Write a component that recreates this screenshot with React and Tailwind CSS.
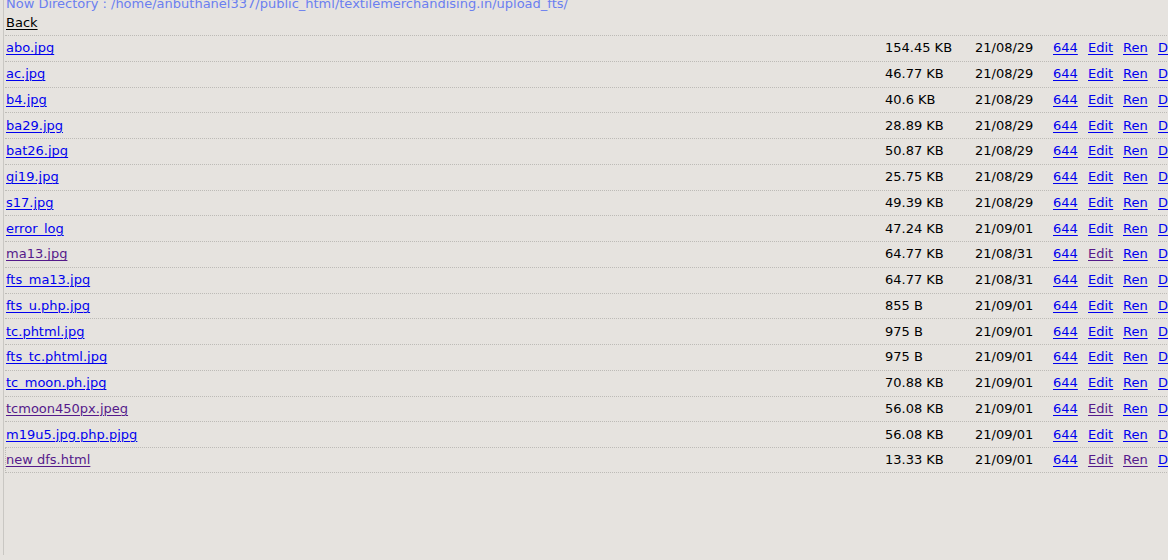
import React from "react";

const rows = [
  { n: "abo.jpg", s: "154.45 KB", d: "21/08/29" },
  { n: "ac.jpg", s: "46.77 KB", d: "21/08/29" },
  { n: "b4.jpg", s: "40.6 KB", d: "21/08/29" },
  { n: "ba29.jpg", s: "28.89 KB", d: "21/08/29" },
  { n: "bat26.jpg", s: "50.87 KB", d: "21/08/29" },
  { n: "gi19.jpg", s: "25.75 KB", d: "21/08/29" },
  { n: "s17.jpg", s: "49.39 KB", d: "21/08/29" },
  { n: "error_log", s: "47.24 KB", d: "21/09/01" },
  { n: "ma13.jpg", s: "64.77 KB", d: "21/08/31", vn: true, ve: true },
  { n: "fts_ma13.jpg", s: "64.77 KB", d: "21/08/31" },
  { n: "fts_u.php.jpg", s: "855 B", d: "21/09/01" },
  { n: "tc.phtml.jpg", s: "975 B", d: "21/09/01" },
  { n: "fts_tc.phtml.jpg", s: "975 B", d: "21/09/01" },
  { n: "tc_moon.ph.jpg", s: "70.88 KB", d: "21/09/01" },
  { n: "tcmoon450px.jpeg", s: "56.08 KB", d: "21/09/01", vn: true, ve: true },
  { n: "m19u5.jpg.php.pjpg", s: "56.08 KB", d: "21/09/01" },
  { n: "new dfs.html", s: "13.33 KB", d: "21/09/01", vn: true, ve: true, vr: true },
];

const link = "underline underline-offset-[2px] decoration-1";

export default function App() {
  return (
    <div
      className="h-[560px] w-[1168px] overflow-hidden bg-[#e6e3df] text-[13px] leading-[18px] text-black"
      style={{ fontFamily: '"DejaVu Sans", Verdana, sans-serif' }}
    >
      <div className="ml-[3px] h-full border-l border-[#c9c7c3] pl-[1px]">
        <div className="-mt-[5px] whitespace-nowrap pl-[1px] text-[#6b7ff0]">
          Now Directory : /home/anbuthanel337/public_html/textilemerchandising.in/upload_fts/
        </div>
        <div className="pl-[1px] pt-[1px] pb-[3px]">
          <span className={link}>Back</span>
        </div>
        <div className="w-[1220px]">
          {rows.map((r, i) => (
            <div
              key={i}
              className={
                "grid h-[25.75px] grid-cols-[879px_90px_78px_35px_35px_35px_60px] items-center whitespace-nowrap border-t border-dotted border-[#bdbbb7]" +
                (i === rows.length - 1 ? " border-b border-l pl-0" : " pl-[1px]")
              }
            >
              <span>
                <span className={link + (r.vn ? " text-[#551a8b]" : " text-[#0000ee]")}>{r.n}</span>
              </span>
              <span>{r.s}</span>
              <span>{r.d}</span>
              <span>
                <span className={link + " text-[#0000ee]"}>644</span>
              </span>
              <span>
                <span className={link + (r.ve ? " text-[#551a8b]" : " text-[#0000ee]")}>Edit</span>
              </span>
              <span>
                <span className={link + (r.vr ? " text-[#551a8b]" : " text-[#0000ee]")}>Ren</span>
              </span>
              <span>
                <span className={link + " text-[#0000ee]"}>Del</span>
              </span>
            </div>
          ))}
        </div>
      </div>
    </div>
  );
}
